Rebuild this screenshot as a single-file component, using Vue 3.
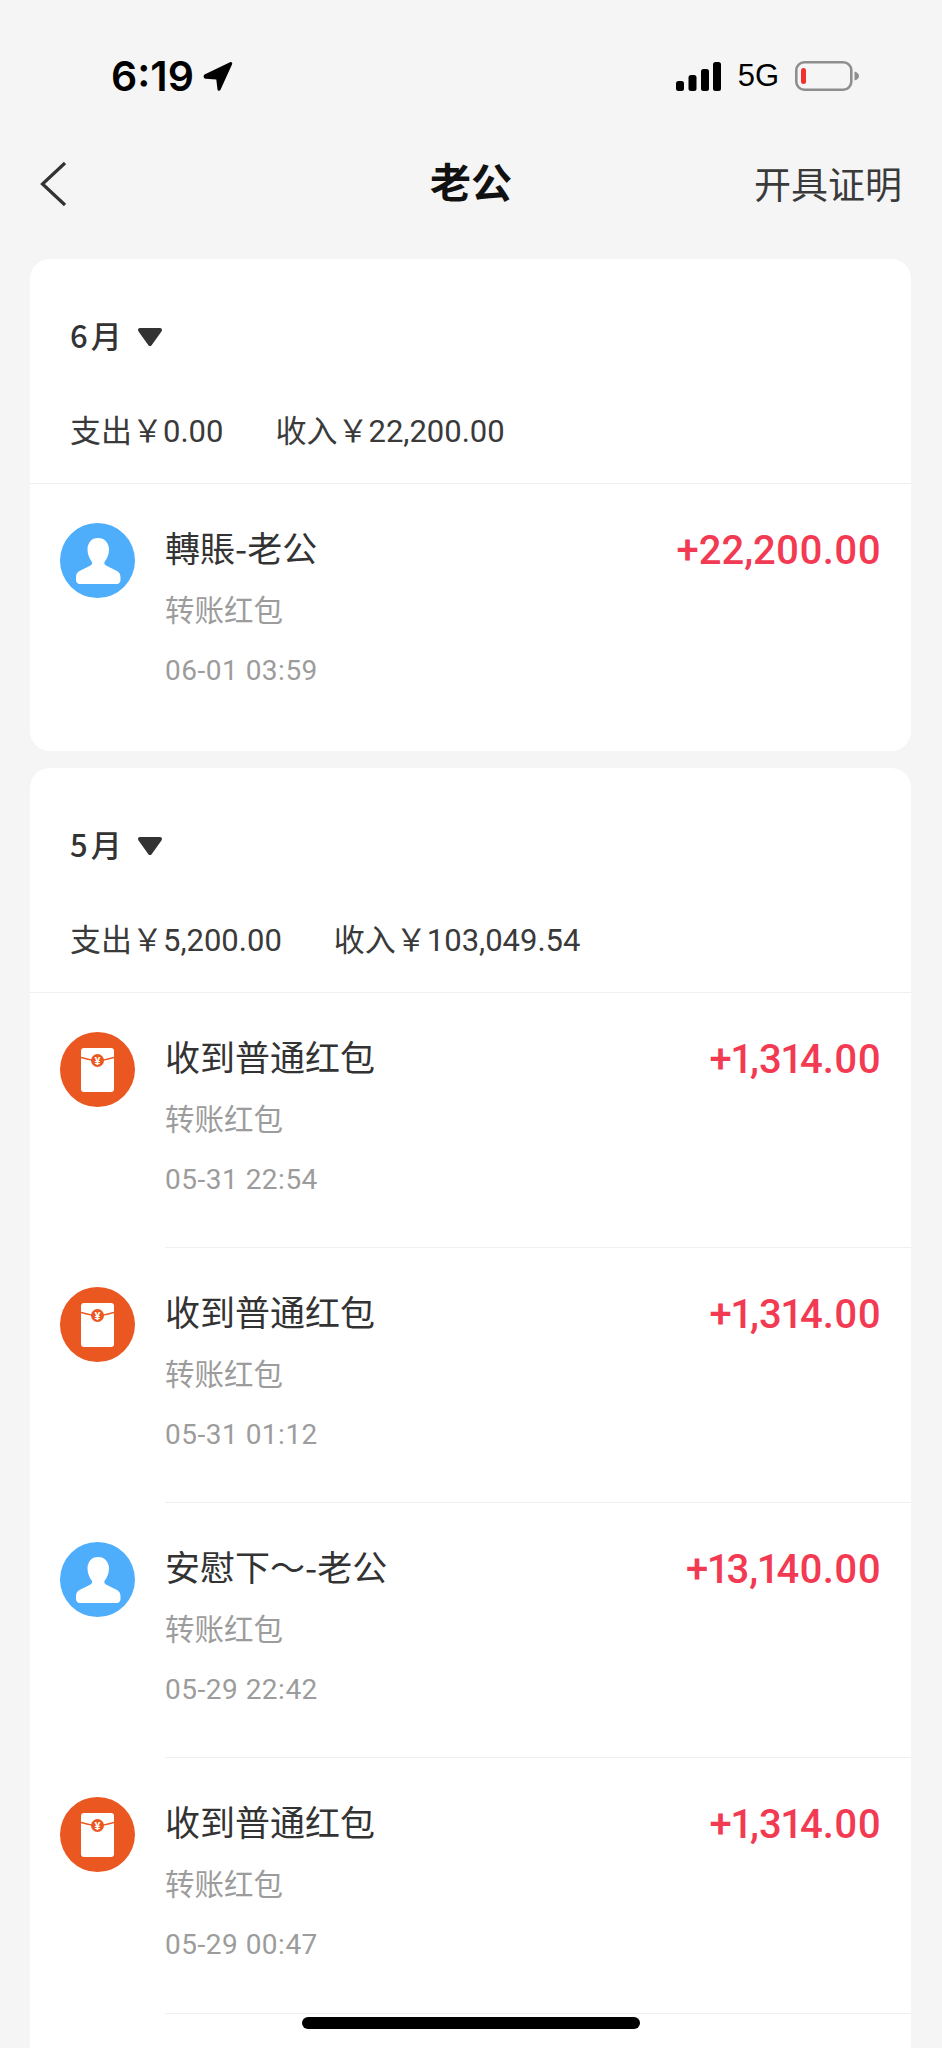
<script setup>
const months = [
  {
    id: 'jun', label: '6月', out: '支出￥0.00', inc: '收入￥22,200.00',
    rows: [{ t: '轉賬-老公', d: '06-01 03:59', a: '+22,200.00', k: 'user' }]
  },
  {
    id: 'may', label: '5月', out: '支出￥5,200.00', inc: '收入￥103,049.54',
    rows: [
      { t: '收到普通红包', d: '05-31 22:54', a: '+1,314.00', k: 'packet' },
      { t: '收到普通红包', d: '05-31 01:12', a: '+1,314.00', k: 'packet' },
      { t: '安慰下～-老公', d: '05-29 22:42', a: '+13,140.00', k: 'user' },
      { t: '收到普通红包', d: '05-29 00:47', a: '+1,314.00', k: 'packet' }
    ]
  }
]
</script>

<template>
  <div class="page">
    <div class="status">
      <div class="time">
        <span>6:19</span>
        <svg width="30" height="31" viewBox="0 0 30 31"><path d="M1.500 13.500 27 1.200c1.400-.7 2.700.6 2.100 2L17.500 28.800c-.7 1.500-2.800 1.200-3-.4L13.300 18.500 2.500 17.800c-1.900-.2-2.500-3.300-1-4.300Z" fill="#000"/></svg>
      </div>
      <div class="sys">
        <svg class="bars" width="45" height="29" viewBox="0 0 45 29">
          <rect x="0" y="19" width="8" height="10" rx="2.500"/>
          <rect x="12.500" y="13" width="8" height="16" rx="2.500"/>
          <rect x="25" y="7" width="8" height="22" rx="2.500"/>
          <rect x="37" y="0" width="8" height="29" rx="2.500"/>
        </svg>
        <span class="net">5G</span>
        <svg width="64" height="30" viewBox="0 0 64 30">
          <rect x="1.300" y="1.300" width="55" height="27.400" rx="8" fill="none" stroke="#8e8e8e" stroke-width="2.600"/>
          <rect x="6" y="7" width="5" height="16" rx="2.500" fill="#f0302c"/>
          <path d="M59.500 10.500c3 1 4.500 2.500 4.500 4.500s-1.500 3.500-4.500 4.500Z" fill="#8e8e8e"/>
        </svg>
      </div>
    </div>

    <header class="nav">
      <svg class="back" width="30" height="48" viewBox="0 0 30 48"><path d="M26 3 3.500 24 26 45" fill="none" stroke="#333" stroke-width="3.200"/></svg>
      <h1>老公</h1>
      <span class="cert">开具证明</span>
    </header>

    <section v-for="m in months" :key="m.id" class="card">
      <div class="month">
        <span>{{ m.label }}</span>
        <svg class="caret" width="26" height="20" viewBox="0 0 26 20"><path d="M3 3h20L13 17Z" fill="#333" stroke="#333" stroke-width="4" stroke-linejoin="round"/></svg>
      </div>
      <div class="sum">
        <span>{{ m.out }}</span>
        <span>{{ m.inc }}</span>
      </div>
      <div class="rows">
        <div v-for="(r, i) in m.rows" :key="i" class="row">
          <div class="avatar" :class="r.k">
            <svg v-if="r.k === 'user'" width="46" height="46" viewBox="0 0 46 46">
              <path d="M23 0c6.500 0 11 4.800 11 11.500 0 5-2 9-4 11.800-1.300 1.700-.8 3.200 1 4.200l11 5.500c2.500 1.300 3.500 3.500 3.500 6.500V42c0 2.300-1.500 4-3.500 4H4.500C2.500 46 1 44.300 1 42v-2.500c0-3 1-5.200 3.500-6.500l11-5.500c1.800-1 2.300-2.500 1-4.200-2-2.800-4-6.800-4-11.800C12.500 4.800 16.500 0 23 0Z" fill="#fff"/>
            </svg>
            <svg v-else width="33" height="44" viewBox="0 0 33 44">
              <rect width="33" height="44" rx="3" fill="#fff"/>
              <path d="M0 9.500C5 11 10 12.300 16.500 13 23 12.300 28 11 33 9.500" fill="none" stroke="#ea5720" stroke-width="1.600"/>
              <circle cx="16.500" cy="12.500" r="6.500" fill="#ea5720"/>
              <text x="16.500" y="16.500" class="yen">¥</text>
            </svg>
          </div>
          <div class="info">
            <div class="title">{{ r.t }}</div>
            <div class="sub">转账红包</div>
            <div class="date">{{ r.d }}</div>
          </div>
          <div class="amt">{{ r.a }}</div>
        </div>
        <div v-if="m.id === 'may'" class="tail"></div>
      </div>
    </section>

    <div class="home"></div>
  </div>
</template>

<style scoped>
.page {
  position: relative;
  width: 942px;
  height: 2048px;
  overflow: hidden;
  background: #f5f5f5;
  font-family: "Noto Sans CJK SC", "Liberation Sans", sans-serif;
  color: #333;
}
.status {
  height: 125px;
  padding: 52px 83px 0 111px;
  box-sizing: border-box;
  display: flex;
  justify-content: space-between;
  align-items: flex-start;
}
.time {
  display: flex;
  align-items: center;
  gap: 9px;
  font: 600 41px/48px "Inter", "Liberation Sans", sans-serif;
  color: #000;
}
.sys {
  display: flex;
  align-items: center;
  gap: 16px;
  height: 48px;
}
.bars { fill: #000; margin-right: 1px; }
.net {
  font: 400 31px/48px "Liberation Sans", sans-serif;
  color: #000;
}
.nav {
  position: relative;
  height: 134px;
  box-sizing: border-box;
  padding: 0 40px 0 39px;
  display: flex;
  justify-content: space-between;
  align-items: center;
}
.nav h1 {
  position: absolute;
  left: 0;
  right: 0;
  top: 0;
  bottom: 0;
  margin: 0;
  text-align: center;
  font-size: 41px;
  font-weight: 600;
  line-height: 110px;
  color: #111;
  padding-bottom: 16px;
}
.back { margin-bottom: 16px; }
.cert {
  font-size: 37px;
  line-height: 110px;
  margin-bottom: 18px;
  color: #3a3a3a;
}
.card {
  margin: 0 31px 17px 30px;
  background: #fff;
  border-radius: 20px;
}
.month {
  height: 150px;
  padding: 0 0 0 40px;
  box-sizing: border-box;
  display: flex;
  align-items: center;
  gap: 12px;
  font-size: 31px;
  font-weight: 500;
  letter-spacing: 3px;
}
.caret { margin-top: 6px; }
.sum {
  height: 73px;
  padding: 0 0 0 40px;
  box-sizing: border-box;
  display: flex;
  align-items: flex-start;
  gap: 52px;
  font-size: 31px;
  line-height: 44px;
  color: #3a3a3a;
  font-family: "Roboto", "Noto Sans CJK SC", sans-serif;
  margin-top: 1px;
}
.rows { border-top: 1px solid #efefef; }
.row {
  position: relative;
  height: 255px;
  padding-left: 135px;
  padding-right: 30px;
  box-sizing: border-box;
  display: flex;
  justify-content: space-between;
}
.card:first-of-type .row { height: 267px; }
.row + .row::before {
  content: "";
  position: absolute;
  left: 135px;
  right: 0;
  top: -1px;
  height: 1px;
  background: #efefef;
}
.tail {
  height: 80px;
  margin-left: 135px;
  border-top: 1px solid #efefef;
}
.avatar {
  position: absolute;
  left: 30px;
  top: 39px;
  width: 75px;
  height: 75px;
  border-radius: 50%;
  display: flex;
  align-items: center;
  justify-content: center;
}
.avatar.user { background: #4eaefc; }
.avatar.packet { background: #ea5720; }
.yen {
  font: 700 11px "Roboto", sans-serif;
  fill: #fff;
  text-anchor: middle;
}
.info { padding-top: 39px; }
.title {
  font-size: 35px;
  line-height: 48px;
  color: #333;
}
.sub {
  font-size: 29.500px;
  line-height: 42px;
  margin-top: 16px;
  color: #9c9c9c;
}
.date {
  font: 400 28px/40px "Roboto", sans-serif;
  margin-top: 22px;
  color: #9c9c9c;
  letter-spacing: 0.500px;
}
.amt {
  font: 500 40px/48px "Roboto", sans-serif;
  font-variant-numeric: proportional-nums;
  color: #f23a52;
  padding-top: 43px;
}
.home {
  position: absolute;
  left: 302px;
  top: 2017px;
  width: 338px;
  height: 12px;
  border-radius: 6px;
  background: #000;
}
</style>
